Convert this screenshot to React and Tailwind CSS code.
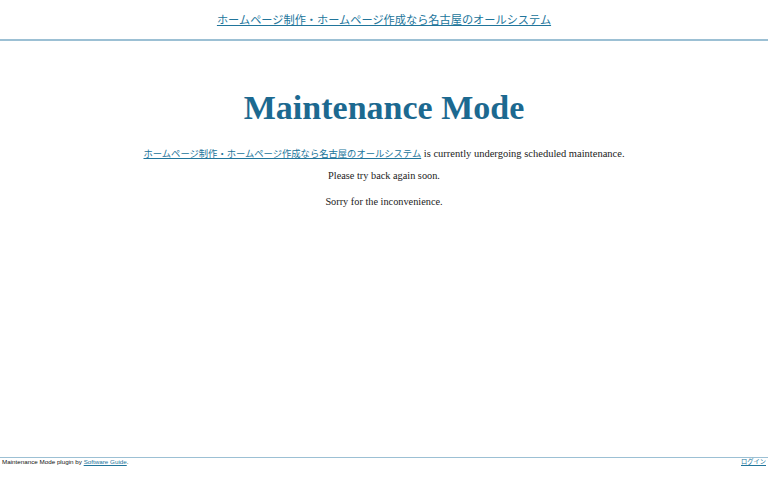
export default function App() {
  const site = 'ホームページ制作・ホームページ作成なら名古屋のオールシステム'
  const serif = { fontFamily: 'Georgia, "Liberation Serif", "Noto Sans CJK JP", serif' }

  return (
    <div className="h-screen flex flex-col bg-white text-[#333]" style={serif}>
      {/* Header */}
      <header className="h-[41px] pt-[1px] border-b-2 border-[#9cc0d4] flex items-center justify-center">
        <a href="#" className="text-[11.2px] text-[#21759b] underline">{site}</a>
      </header>

      {/* Main */}
      <main className="flex-1 flex flex-col items-center text-center">
        <h1 className="mt-[47px] text-[34px] font-bold text-[#1c6990] leading-[40px]">Maintenance Mode</h1>
        <p className="mt-[19px] text-[10.5px] leading-[14px] text-[#222]">
          <a href="#" className="text-[9.3px] text-[#21759b] underline">{site}</a> is currently undergoing scheduled maintenance.
        </p>
        <p className="mt-[8px] text-[10.3px] leading-[14px] text-[#222]">Please try back again soon.</p>
        <p className="mt-[12px] text-[10.3px] leading-[14px] text-[#222]">Sorry for the inconvenience.</p>
      </main>

      {/* Footer */}
      <footer
        className="h-[23px] border-t border-[#9cc0d4] flex items-start justify-between px-[2px] text-[6.25px] leading-[8px] text-[#111]"
        style={{ fontFamily: '"Liberation Sans", "Noto Sans CJK JP", sans-serif' }}
      >
        <span>
          Maintenance Mode plugin by <a href="#" className="text-[#21759b] underline">Software Guide</a>.
        </span>
        <a href="#" className="text-[#21759b] underline">ログイン</a>
      </footer>
    </div>
  )
}
